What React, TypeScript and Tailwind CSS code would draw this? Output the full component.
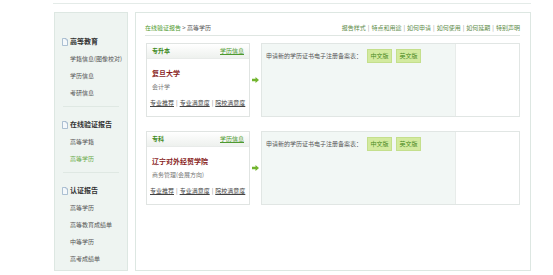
import React from 'react';

const font = { fontFamily: '"Noto Sans CJK SC", "Noto Sans", sans-serif' };

const DocIcon = () => (
  <svg width="6" height="8" viewBox="0 0 6 8" className="shrink-0">
    <path d="M0.5 0.5 H4 L5.5 2 V7.5 H0.5 Z" fill="#f4f8fb" stroke="#9bb3c9" strokeWidth="0.8" />
    <path d="M4 0.5 V2 H5.5" fill="none" stroke="#9bb3c9" strokeWidth="0.6" />
  </svg>
);

const Arrow = () => (
  <svg width="7" height="6" viewBox="0 0 7 6">
    <path d="M0 1.8 H3.5 V0 L7 3 L3.5 6 V4.2 H0 Z" fill="#72b52e" />
  </svg>
);

interface SideSection {
  title: string;
  items: { label: string; active?: boolean }[];
}

const sections: SideSection[] = [
  {
    title: '高等教育',
    items: [{ label: '学籍信息(图像校对)' }, { label: '学历信息' }, { label: '考研信息' }],
  },
  {
    title: '在线验证报告',
    items: [{ label: '高等学籍' }, { label: '高等学历', active: true }],
  },
  {
    title: '认证报告',
    items: [
      { label: '高等学历' },
      { label: '高等教育成绩单' },
      { label: '中等学历' },
      { label: '高考成绩单' },
    ],
  },
];

const Sidebar = () => (
  <div className="w-[74px] h-[259px] bg-[#eef4f1] border border-[#dde7e2] pt-[20px] shrink-0">
    {sections.map((s, i) => (
      <div key={s.title}>
        {i > 0 && <div className="mt-[5px] mb-[9px] mx-[8px] border-t border-[#dfe8e3]" />}
        <div className="h-[17px] flex items-center gap-[2px] pl-[7px]">
          <DocIcon />
          <span className="text-[7px] font-bold text-[#333] leading-none">{s.title}</span>
        </div>
        {s.items.map((it) => (
          <div
            key={it.label}
            className={`h-[17px] flex items-center pl-[15px] text-[6px] leading-none whitespace-nowrap ${
              it.active ? 'text-[#6aaa4a]' : 'text-[#555]'
            }`}
          >
            {it.label}
          </div>
        ))}
      </div>
    ))}
  </div>
);

interface Record {
  level: string;
  school: string;
  major: string;
}

const records: Record[] = [
  { level: '专升本', school: '复旦大学', major: '会计学' },
  { level: '专科', school: '辽宁对外经贸学院', major: '商务管理(会展方向)' },
];

const RecordRow = ({ r, first }: { r: Record; first: boolean }) => (
  <div className={`flex h-[74px] ${first ? 'mt-[7px]' : 'mt-[14px]'}`}>
    <div className="w-[104px] ml-[1px] border border-[#e0e4e2] bg-white flex flex-col shrink-0">
      <div className="h-[15px] flex items-center justify-between px-[5px] bg-gradient-to-b from-white to-[#eef1ee] border-b border-[#e8ebe9]">
        <span className="text-[6px] font-bold text-[#3d8a22] leading-none">{r.level}</span>
        <span className="text-[6px] text-[#4f9a30] underline leading-none">学历信息</span>
      </div>
      <div className="pt-[8px] px-[5px] h-[20px] flex items-center text-[7px] font-bold text-[#8a1f1f] leading-none whitespace-nowrap">
        {r.school}
      </div>
      <div className="h-[16px] px-[5px] flex items-center text-[6px] text-[#777] leading-none whitespace-nowrap">
        {r.major}
      </div>
      <div className="h-[16px] px-[3px] flex items-center text-[6px] text-[#444] leading-none gap-[2px] whitespace-nowrap">
        <span className="underline">专业推荐</span>
        <span className="text-[#888]">|</span>
        <span className="underline">专业满意度</span>
        <span className="text-[#888]">|</span>
        <span className="underline">院校满意度</span>
      </div>
    </div>
    <div className="w-[11px] flex items-center justify-center shrink-0">
      <Arrow />
    </div>
    <div className="flex-1 border border-[#e1e6e4] flex">
      <div className="w-[193px] bg-[#f2f7f5] pt-[5px] pl-[4px] flex items-start">
        <div className="flex items-center h-[14px] whitespace-nowrap">
          <span className="text-[6px] text-[#555] leading-none">申请新的学历证书电子注册备案表：</span>
          <span className="ml-[5px] w-[25px] h-[14px] flex items-center justify-center bg-[#d3ea9f] border border-[#c4df8c] text-[6px] text-[#4a8a22] leading-none">
            中文版
          </span>
          <span className="ml-[4px] w-[25px] h-[14px] flex items-center justify-center bg-[#d3ea9f] border border-[#c4df8c] text-[6px] text-[#4a8a22] leading-none">
            英文版
          </span>
        </div>
      </div>
      <div className="flex-1 bg-white border-l border-[#e8ecea]" />
    </div>
  </div>
);

const links = ['报告样式', '特点和用途', '如何申请', '如何使用', '如何延期', '特别声明'];

export default function App() {
  return (
    <div className="w-[553px] h-[275px] bg-white overflow-hidden" style={font}>
      <div className="ml-[53px] w-[478px] h-[4px] border-b border-[#e4ebe8]" />
      <div className="flex mt-[8px] ml-[54px] gap-[7px]">
        <Sidebar />
        <div className="w-[396px] h-[259px] border border-[#dde7e2] bg-white pt-[8px] pl-[9px] pr-[10px]">
          <div className="h-[15px] flex items-center justify-between border-b border-[#dfe6e2]">
            <div className="text-[6px] leading-none whitespace-nowrap">
              <span className="text-[#4f9a30]">在线验证报告</span>
              <span className="text-[#555]"> &gt; 高等学历</span>
            </div>
            <div className="text-[6px] leading-none text-[#5e8c4a] flex gap-[2px] whitespace-nowrap">
              {links.map((l, i) => (
                <React.Fragment key={l}>
                  {i > 0 && <span className="text-[#999]">|</span>}
                  <span>{l}</span>
                </React.Fragment>
              ))}
            </div>
          </div>
          {records.map((r, i) => (
            <RecordRow key={r.school} r={r} first={i === 0} />
          ))}
        </div>
      </div>
    </div>
  );
}
